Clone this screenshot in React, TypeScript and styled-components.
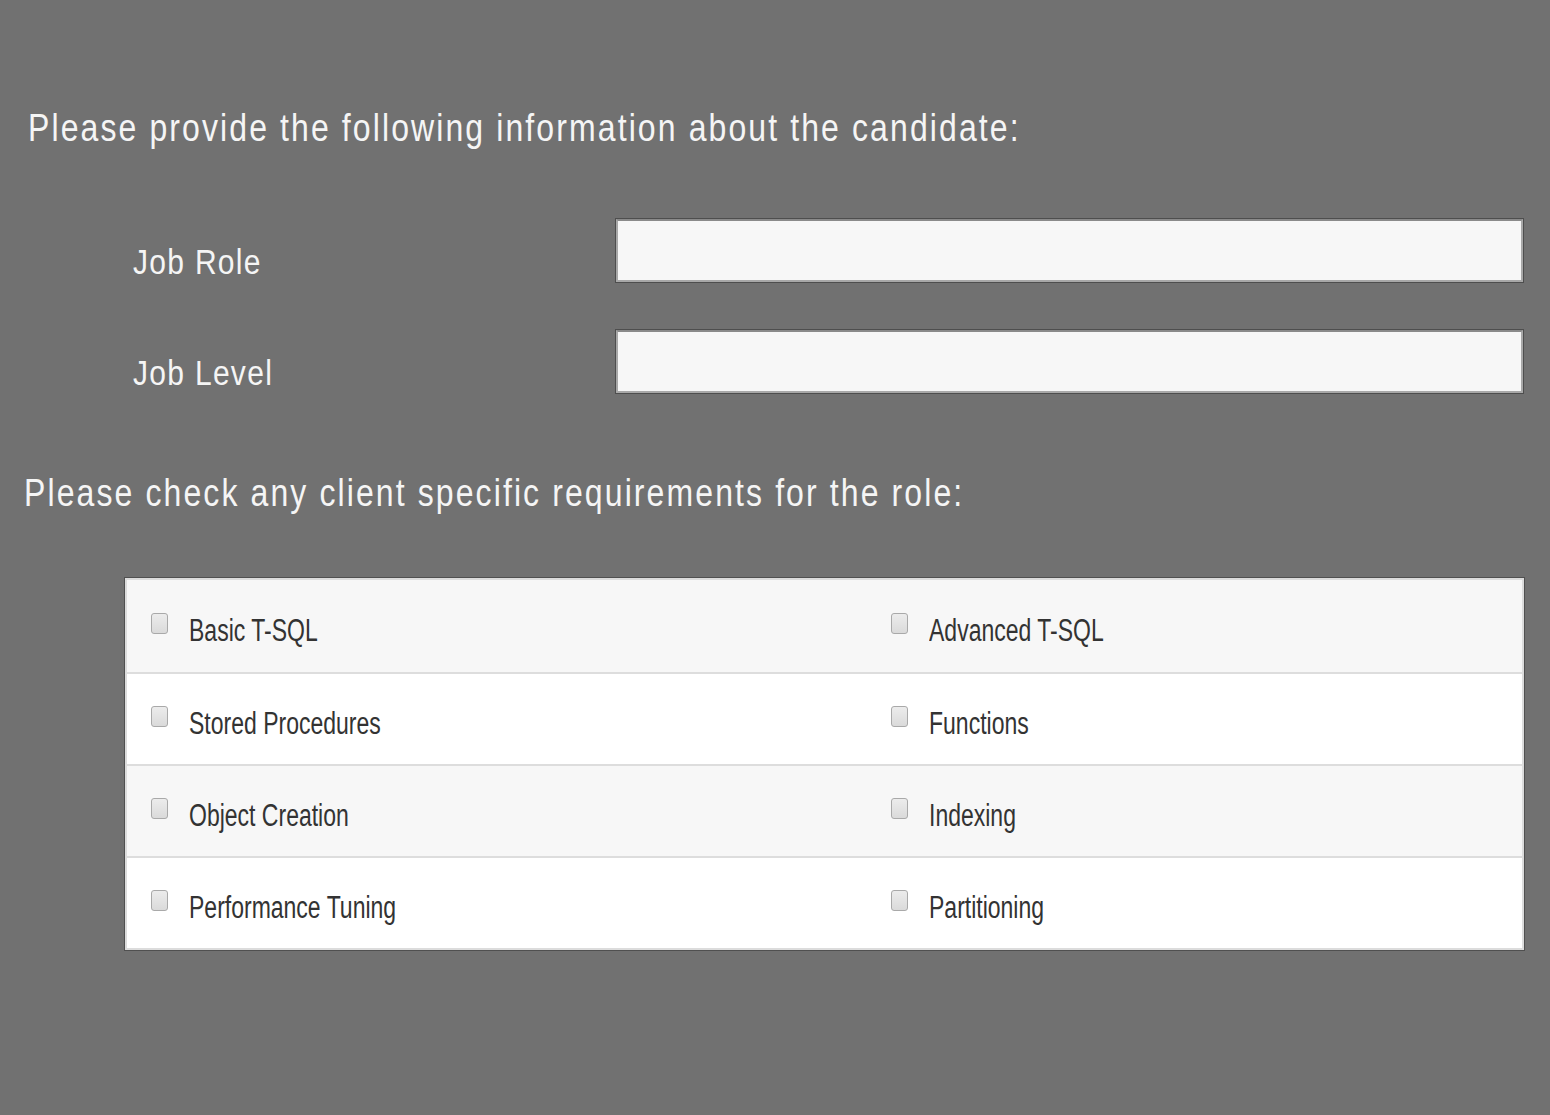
import React from "react";
import styled, { createGlobalStyle } from "styled-components";

const GlobalStyle = createGlobalStyle`
  html, body {
    margin: 0;
    padding: 0;
    background: #717171;
  }
  body {
    font-family: "Liberation Sans", Arial, sans-serif;
  }
`;

const requirements: [string, string][] = [
  ["Basic T-SQL", "Advanced T-SQL"],
  ["Stored Procedures", "Functions"],
  ["Object Creation", "Indexing"],
  ["Performance Tuning", "Partitioning"],
];

const fields = ["Job Role", "Job Level"];

export default function App() {
  return (
    <>
      <GlobalStyle />
      <Page>
        <Heading $indent={28}>Please provide the following information about the candidate:</Heading>
        <Fields>
          {fields.map((f) => (
            <FieldRow key={f}>
              <FieldLabel>{f}</FieldLabel>
              <TextInput type="text" />
            </FieldRow>
          ))}
        </Fields>
        <Heading $indent={24}>Please check any client specific requirements for the role:</Heading>
        <Table>
          {requirements.map((row, i) => (
            <Row key={i} $striped={i % 2 === 0}>
              {row.map((item) => (
                <Cell key={item}>
                  <Check type="checkbox" />
                  <CellLabel>{item}</CellLabel>
                </Cell>
              ))}
            </Row>
          ))}
        </Table>
      </Page>
    </>
  );
}

const Page = styled.div`
  width: 1550px;
  height: 1115px;
  box-sizing: border-box;
  padding-top: 106px;
  display: flex;
  flex-direction: column;
`;

// the source text is tall and tracked out, so stretch it a little
const Heading = styled.h1<{ $indent: number }>`
  margin: 0;
  padding-left: ${(p) => p.$indent}px;
  font-size: 32px;
  line-height: 44px;
  font-weight: 400;
  letter-spacing: 2.1px;
  color: #f5f5f5;
  transform: scaleY(1.2);
  transform-origin: left center;
`;

const Fields = styled.div`
  display: flex;
  flex-direction: column;
  gap: 48px;
  margin: 69px 0 78px;
`;

const FieldRow = styled.div`
  display: grid;
  grid-template-columns: 483px 907px;
  padding-left: 133px;
  align-items: end;
`;

const FieldLabel = styled.span`
  font-size: 30px;
  line-height: 36px;
  letter-spacing: 1.3px;
  color: #f5f5f5;
  padding-bottom: 2px;
  transform: scaleY(1.18);
  transform-origin: left center;
`;

const TextInput = styled.input`
  box-sizing: border-box;
  height: 63px;
  margin: 0;
  background: #f7f7f7;
  border: 2px solid #a8a8a8;
  border-top-color: #8a8a8a;
  box-shadow: 0 0 0 1px #4e4e4e;
  outline: none;
`;

const Table = styled.div`
  margin: 63px 0 0 125px;
  width: 1399px;
  box-sizing: border-box;
  border: 2px solid #dcdcdc;
  box-shadow: 0 0 0 1px #505050;
  display: flex;
  flex-direction: column;
`;

const Row = styled.div<{ $striped: boolean }>`
  display: grid;
  grid-template-columns: 740px 1fr;
  height: 92px;
  box-sizing: border-box;
  background: ${(p) => (p.$striped ? "#f7f7f7" : "#ffffff")};
  & + & {
    border-top: 2px solid #dddddd;
  }
`;

const Cell = styled.label`
  display: flex;
  align-items: center;
  padding-left: 24px;
  gap: 21px;
`;

const Check = styled.input`
  appearance: none;
  margin: 0 0 5px;
  width: 17px;
  height: 21px;
  border: 1px solid #a9a9a9;
  border-radius: 3px;
  background: linear-gradient(#ececec, #dadada);
`;

// condensed look of the original labels
const CellLabel = styled.span`
  display: inline-block;
  font-size: 23px;
  color: #333333;
  margin-top: 8px;
  transform: scaleY(1.35);
`;
